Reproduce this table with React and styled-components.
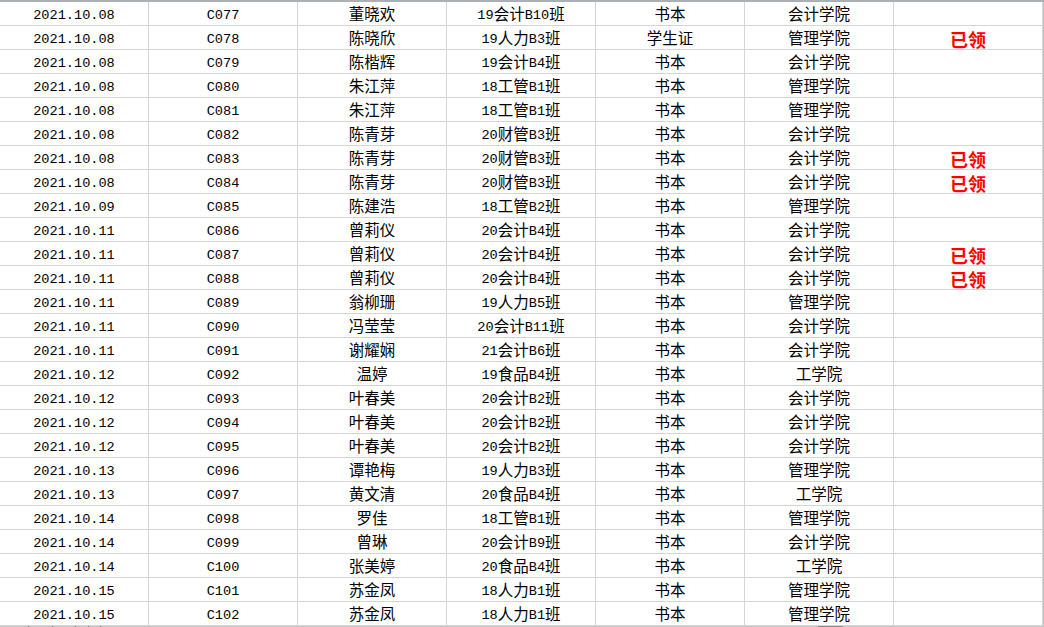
import React from 'react';
import styled, { createGlobalStyle } from 'styled-components';

const rows = [
  ['2021.10.08', 'C077', '董晓欢', '19会计B10班', '书本', '会计学院', ''],
  ['2021.10.08', 'C078', '陈晓欣', '19人力B3班', '学生证', '管理学院', '已领'],
  ['2021.10.08', 'C079', '陈楷辉', '19会计B4班', '书本', '会计学院', ''],
  ['2021.10.08', 'C080', '朱江萍', '18工管B1班', '书本', '管理学院', ''],
  ['2021.10.08', 'C081', '朱江萍', '18工管B1班', '书本', '管理学院', ''],
  ['2021.10.08', 'C082', '陈青芽', '20财管B3班', '书本', '会计学院', ''],
  ['2021.10.08', 'C083', '陈青芽', '20财管B3班', '书本', '会计学院', '已领'],
  ['2021.10.08', 'C084', '陈青芽', '20财管B3班', '书本', '会计学院', '已领'],
  ['2021.10.09', 'C085', '陈建浩', '18工管B2班', '书本', '管理学院', ''],
  ['2021.10.11', 'C086', '曾莉仪', '20会计B4班', '书本', '会计学院', ''],
  ['2021.10.11', 'C087', '曾莉仪', '20会计B4班', '书本', '会计学院', '已领'],
  ['2021.10.11', 'C088', '曾莉仪', '20会计B4班', '书本', '会计学院', '已领'],
  ['2021.10.11', 'C089', '翁柳珊', '19人力B5班', '书本', '管理学院', ''],
  ['2021.10.11', 'C090', '冯莹莹', '20会计B11班', '书本', '会计学院', ''],
  ['2021.10.11', 'C091', '谢耀娴', '21会计B6班', '书本', '会计学院', ''],
  ['2021.10.12', 'C092', '温婷', '19食品B4班', '书本', '工学院', ''],
  ['2021.10.12', 'C093', '叶春美', '20会计B2班', '书本', '会计学院', ''],
  ['2021.10.12', 'C094', '叶春美', '20会计B2班', '书本', '会计学院', ''],
  ['2021.10.12', 'C095', '叶春美', '20会计B2班', '书本', '会计学院', ''],
  ['2021.10.13', 'C096', '谭艳梅', '19人力B3班', '书本', '管理学院', ''],
  ['2021.10.13', 'C097', '黄文清', '20食品B4班', '书本', '工学院', ''],
  ['2021.10.14', 'C098', '罗佳', '18工管B1班', '书本', '管理学院', ''],
  ['2021.10.14', 'C099', '曾琳', '20会计B9班', '书本', '会计学院', ''],
  ['2021.10.14', 'C100', '张美婷', '20食品B4班', '书本', '工学院', ''],
  ['2021.10.15', 'C101', '苏金凤', '18人力B1班', '书本', '管理学院', ''],
  ['2021.10.15', 'C102', '苏金凤', '18人力B1班', '书本', '管理学院', ''],
];

// little marks along the top edge of the sheet tab bar
const ticks = [28, 52, 75, 88, 100];

const GlobalStyle = createGlobalStyle`
  html, body {
    margin: 0;
    padding: 0;
    background: #fff;
    overflow: hidden;
  }
`;

// splits ascii runs out so digits get the narrow half-width look
const renderText = (text) =>
  text
    .split(/([\x00-\x7F]+)/)
    .filter(Boolean)
    .map((part, i) =>
      /^[\x00-\x7F]+$/.test(part) ? <Latin key={i}>{part}</Latin> : <span key={i}>{part}</span>
    );

const App = () => {
  return (
    <>
      <GlobalStyle />
      <Sheet>
        <Grid>
          {rows.map((row, r) =>
            row.map((cell, c) => (
              <Cell key={`${r}-${c}`}>
                {c === 6 ? cell && <Claimed>{cell}</Claimed> : renderText(cell)}
              </Cell>
            ))
          )}
        </Grid>
        <TabBar>
          {ticks.map((x) => (
            <Tick key={x} $left={x} />
          ))}
          <Thumb />
        </TabBar>
      </Sheet>
    </>
  );
};

const Sheet = styled.div`
  width: 1044px;
  height: 627px;
  display: flex;
  flex-direction: column;
  border-top: 2px solid #abb0b5;
  box-sizing: border-box;
  overflow: hidden;
`;

const Grid = styled.div`
  display: grid;
  grid-template-columns: repeat(7, 149px);
  grid-auto-rows: 24px;
  border-right: 1px solid #c4c4c4;
  width: 1044px;
  box-sizing: border-box;
`;

const Cell = styled.div`
  display: flex;
  align-items: center;
  justify-content: center;
  padding-top: 1px;
  border-right: 1px solid #d4d4d4;
  border-bottom: 1px solid #d4d4d4;
  box-sizing: border-box;
  font-family: 'Noto Sans CJK SC', sans-serif;
  font-size: 15.5px;
  color: #000;
  white-space: nowrap;
  line-height: 1;
`;

const Latin = styled.span`
  font-family: 'Liberation Mono', monospace;
  font-size: 13.6px;
  position: relative;
  top: 1.5px;
`;

const Claimed = styled.span`
  font-family: 'Noto Sans CJK SC', sans-serif;
  font-size: 18px;
  font-weight: 700;
  color: #ff0000;
  padding-top: 1px;
`;

const TabBar = styled.div`
  position: relative;
  height: 1px;
  background: #c8c8c8;
`;

const Tick = styled.span`
  position: absolute;
  top: 0;
  left: ${(p) => p.$left}px;
  width: 1px;
  height: 1px;
  background: #707070;
`;

const Thumb = styled.span`
  position: absolute;
  top: 0;
  left: 818px;
  width: 25px;
  height: 1px;
  background: #8c8c8c;
`;

export default App;
